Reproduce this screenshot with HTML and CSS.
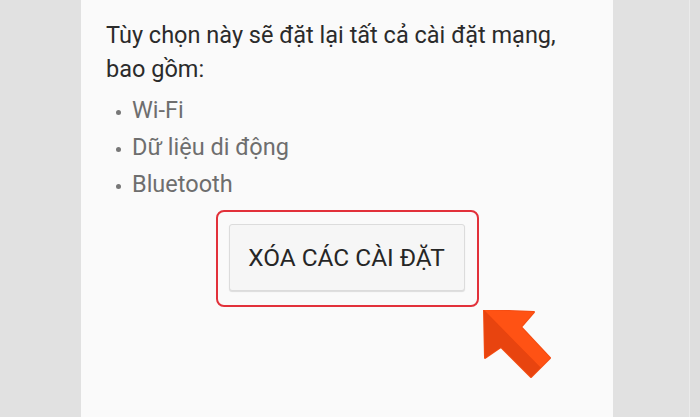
FILE: index.html
```html
<!DOCTYPE html>
<html lang="vi">
<head>
<meta charset="utf-8">
<link rel="stylesheet" href="styles.css">
</head>
<body>
<div class="screen">
  <div class="side side-left"></div>
  <main class="panel">
    <p class="intro">Tùy chọn này sẽ đặt lại tất cả cài đặt mạng, bao gồm:</p>
    <ul class="list">
      <li>Wi-Fi</li>
      <li>Dữ liệu di động</li>
      <li>Bluetooth</li>
    </ul>
    <div class="action">
      <div class="highlight">
        <button class="btn">XÓA CÁC CÀI ĐẶT</button>
      </div>
      <svg class="arrow" width="80" height="80" viewBox="0 0 80 80">
        <path d="M1 0 L51 2 L38 17 L67 48 L48 67 L18 37 L2 48 Z" fill="#f44c12" stroke="#f44c12" stroke-width="2" stroke-linejoin="round"/>
        <path d="M1 0 L51 2 L38 17 L67 48 L57.5 57.5 L1 0 Z" fill="#ff5214"/>
        <path d="M1 0 L57.5 57.5 L48 67 L18 37 L2 48 Z" fill="#e8440f"/>
      </svg>
    </div>
  </main>
  <div class="side side-right"><div class="stripe"></div></div>
</div>
</body>
</html>
```
FILE: styles.css
```css
html, body {
  margin: 0;
  padding: 0;
}
body {
  width: 700px;
  height: 417px;
  overflow: hidden;
  font-family: Roboto, "Noto Sans", "Liberation Sans", sans-serif;
}
.screen {
  display: flex;
  width: 700px;
  height: 417px;
}
.side {
  background: #e1e1e1;
}
.side-left {
  width: 81px;
}
.side-right {
  width: 87px;
  display: flex;
  justify-content: flex-end;
}
.stripe {
  width: 10px;
  background: #dedede;
  border-left: 1px solid #ebebeb;
}
.panel {
  width: 532px;
  background: #fafafa;
  padding: 18px 0 0 25px;
  box-sizing: border-box;
}
.intro {
  margin: 0;
  font-size: 23.5px;
  line-height: 34px;
  color: #2b2b2b;
  width: 470px;
}
.list {
  list-style: none;
  margin: 6px 0 0;
  padding: 0 0 0 10px;
  font-size: 23.5px;
  line-height: 37px;
  color: #6e6e6e;
}
.list li {
  display: flex;
  align-items: center;
}
.list li::before {
  content: "";
  width: 5px;
  height: 5px;
  border-radius: 50%;
  background: #777777;
  margin-right: 11px;
  margin-top: 3px;
}
.action {
  position: relative;
  display: flex;
  justify-content: center;
  margin: 7px 0 0 -25px;
}
.highlight {
  border: 2px solid #e2313a;
  border-radius: 8px;
  padding: 12px 12px 14px 11px;
}
.btn {
  display: block;
  width: 236px;
  height: 67px;
  background: #f6f6f6;
  border: 1px solid #dcdcdc;
  border-radius: 3px;
  box-shadow: 0 1px 1px rgba(0,0,0,0.12);
  font-family: Roboto, "Noto Sans", "Liberation Sans", sans-serif;
  font-size: 24.4px;
  color: #262626;
  padding: 0;
}
.arrow {
  position: absolute;
  left: 402px;
  top: 100px;
}
```
